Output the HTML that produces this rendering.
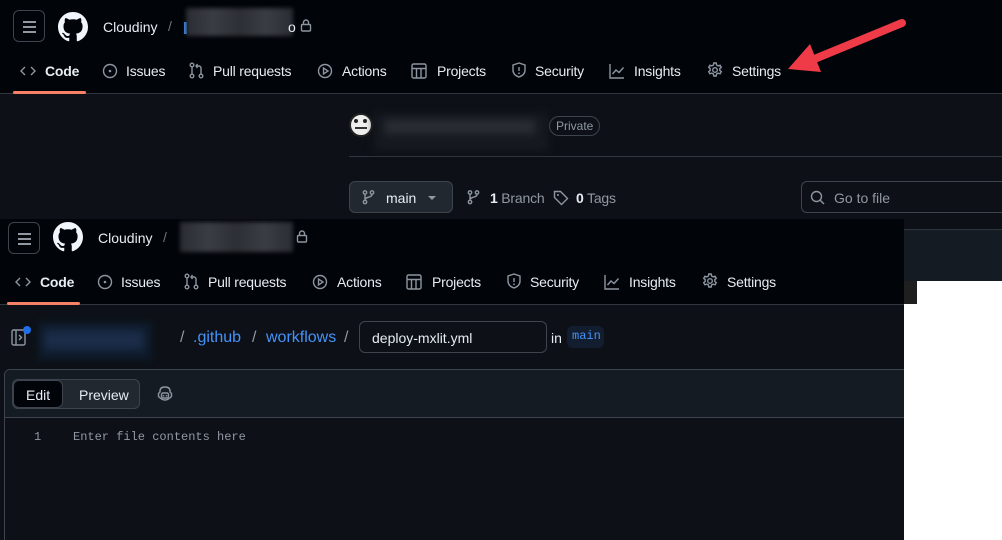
<!DOCTYPE html>
<html><head><meta charset="utf-8"><style>
*{margin:0;padding:0;box-sizing:border-box}
html,body{width:1002px;height:540px;overflow:hidden}
body{background:#0d1117;position:relative;font-family:"Liberation Sans",sans-serif;color:#e6edf3;font-size:14px}
.a{position:absolute}
.t{position:absolute;white-space:nowrap}
svg{position:absolute;overflow:visible}
.ic{fill:none;stroke:#8d96a0;stroke-width:1.4}
.hdr{position:absolute;left:0;width:1002px;height:94px;background:#010409;border-bottom:1px solid #30363d}
.ham{position:absolute;width:32px;height:32px;border:1px solid #3d444d;border-radius:6px}
.ham i{position:absolute;left:9px;width:13px;height:1.6px;background:#9198a1}
.blur{position:absolute;background:linear-gradient(90deg,#2a2d33,#3a3d44,#2c2f35,#3a3d44,#2a2d33);filter:blur(2px)}
.tb .t{letter-spacing:-0.2px}
</style></head><body>

<div class="hdr" style="top:0"></div>
<div class="ham" style="left:13px;top:10px"><i style="top:10px"></i><i style="top:15px"></i><i style="top:20px"></i></div>
<svg style="left:58px;top:12px" width="30" height="30" viewBox="0 0 16 16"><path fill="#f0f6fc" d="M8 0C3.58 0 0 3.58 0 8c0 3.54 2.29 6.53 5.47 7.59.4.07.55-.17.55-.38 0-.19-.01-.82-.01-1.49-2.01.37-2.53-.49-2.69-.94-.09-.23-.48-.94-.82-1.13-.28-.15-.68-.52-.01-.53.63-.01 1.08.58 1.23.82.72 1.21 1.87.87 2.33.66.07-.52.28-.87.51-1.07-1.78-.2-3.64-.89-3.64-3.95 0-.87.31-1.59.82-2.15-.08-.2-.36-1.02.08-2.12 0 0 .67-.21 2.2.82.64-.18 1.32-.27 2-.27.68 0 1.36.09 2 .27 1.53-1.04 2.2-.82 2.2-.82.44 1.1.16 1.92.08 2.12.51.56.82 1.27.82 2.15 0 3.07-1.87 3.75-3.65 3.95.29.25.54.73.54 1.48 0 1.07-.01 1.93-.01 2.2 0 .21.15.46.55.38A8.013 8.013 0 0016 8c0-4.42-3.58-8-8-8z"/></svg>
<div class="t" style="left:103px;top:19px;font-size:14px">Cloudiny</div>
<div class="t" style="left:168px;top:18px;color:#6e7681">/</div>
<div class="a" style="left:184px;top:22px;width:3px;height:12px;background:#4493f8"></div>
<div class="blur" style="left:186px;top:8px;width:107px;height:28px"></div>
<div class="t" style="left:288px;top:19px;color:#e6edf3">o</div>
<svg style="left:300px;top:19px" width="12" height="13"><rect x="1.5" y="5.5" width="9" height="6.5" rx="1" class="ic" stroke="#e6edf3"/><path d="M3.5 5.5V3.5a2.5 2.5 0 015 0v2" class="ic" stroke="#e6edf3"/></svg>

<div class="tb">
<svg style="left:20px;top:64px" width="16" height="14"><path d="M5 3L1 7l4 4M11 3l4 4-4 4" class="ic"/></svg>
<div class="t" style="left:45px;top:63px;font-weight:bold">Code</div>
<div class="a" style="left:13px;top:91px;width:73px;height:3px;background:#f78166;border-radius:2px"></div>
<svg style="left:102px;top:63px" width="16" height="16"><circle cx="8" cy="8" r="6.5" class="ic"/><circle cx="8" cy="8" r="1.3" fill="#8d96a0"/></svg>
<div class="t" style="left:126px;top:63px">Issues</div>
<svg style="left:189px;top:62px" width="16" height="17"><circle cx="3" cy="3" r="1.8" class="ic"/><circle cx="3" cy="14" r="1.8" class="ic"/><circle cx="12" cy="14" r="1.8" class="ic"/><path d="M3 5v7M12 12V6c0-1-1-2-2-2H7M8.5 2L7 4l1.5 2" class="ic"/></svg>
<div class="t" style="left:213px;top:63px">Pull requests</div>
<svg style="left:317px;top:63px" width="16" height="16"><circle cx="8" cy="8" r="6.5" class="ic"/><path d="M6.5 5v6l4.5-3z" class="ic"/></svg>
<div class="t" style="left:342px;top:63px">Actions</div>
<svg style="left:411px;top:63px" width="16" height="16"><rect x="1" y="1" width="14" height="14" rx="1.5" class="ic"/><path d="M1 5.5h14M5.5 5.5V15M10 5.5V15" class="ic"/></svg>
<div class="t" style="left:437px;top:63px">Projects</div>
<svg style="left:511px;top:62px" width="16" height="17"><path d="M8 1L2 3v5c0 4 3 6 6 7 3-1 6-3 6-7V3z" class="ic"/><path d="M8 5v4" class="ic"/><circle cx="8" cy="11.3" r=".9" fill="#8d96a0"/></svg>
<div class="t" style="left:535px;top:63px">Security</div>
<svg style="left:609px;top:63px" width="16" height="16"><path d="M1 1v14h14M3.5 11l3.5-4 3 2.5 4.5-5" class="ic"/></svg>
<div class="t" style="left:634px;top:63px">Insights</div>
<svg style="left:707px;top:62px" width="16" height="16"><circle cx="8" cy="8" r="2.3" class="ic"/><path d="M6.8 1h2.4l.4 2 1.6.9 1.9-.7 1.2 2.1-1.5 1.3v1.8l1.5 1.3-1.2 2.1-1.9-.7-1.6.9-.4 2H6.8l-.4-2-1.6-.9-1.9.7-1.2-2.1 1.5-1.3V6.6L1.7 5.3l1.2-2.1 1.9.7 1.6-.9z" class="ic"/></svg>
<div class="t" style="left:732px;top:63px">Settings</div>
</div>

<div class="a" style="left:349px;top:156px;width:653px;height:1px;background:#30363d"></div>
<div class="a" style="left:349px;top:113px;width:24px;height:24px;border-radius:50%;background:#eee;border:2px solid #222"></div>
<div class="a" style="left:354px;top:119px;width:4px;height:4px;border-radius:50%;background:#222"></div>
<div class="a" style="left:363px;top:119px;width:4px;height:4px;border-radius:50%;background:#222"></div>
<div class="a" style="left:355px;top:127px;width:12px;height:2px;background:#333"></div>
<div class="blur" style="left:374px;top:113px;width:174px;height:38px;background:#161a20;filter:blur(4px)"></div>
<div class="blur" style="left:385px;top:120px;width:150px;height:14px;background:#2a2d33;filter:blur(4px)"></div>
<div class="t" style="left:549px;top:116px;height:20px;padding:2px 6px;border:1px solid #3d444d;border-radius:10px;font-size:12px;color:#9198a1;line-height:14px">Private</div>
<div class="a" style="left:349px;top:181px;width:104px;height:32px;background:#212830;border:1px solid #3d444d;border-radius:6px"></div>
<svg style="left:362px;top:190px" width="12" height="14"><circle cx="3" cy="2.5" r="1.7" class="ic"/><circle cx="3" cy="12" r="1.7" class="ic"/><circle cx="10" cy="2.5" r="1.7" class="ic"/><path d="M3 4.2v6M10 4.2c0 4-7 2-7 6" class="ic"/></svg>
<div class="t" style="left:386px;top:190px">main</div>
<div class="a" style="left:428px;top:196px;border:4px solid transparent;border-top:4px solid #9198a1"></div>
<svg style="left:467px;top:190px" width="12" height="14"><circle cx="3" cy="2.5" r="1.7" class="ic"/><circle cx="3" cy="12" r="1.7" class="ic"/><circle cx="10" cy="2.5" r="1.7" class="ic"/><path d="M3 4.2v6M10 4.2c0 4-7 2-7 6" class="ic"/></svg>
<div class="t" style="left:490px;top:190px;letter-spacing:-0.2px"><b>1</b> <span style="color:#9198a1">Branch</span></div>
<svg style="left:553px;top:190px" width="16" height="16"><path d="M1.5 1.5h6l7 7-6 6-7-7z" class="ic"/><circle cx="5" cy="5" r="1" fill="#8d96a0"/></svg>
<div class="t" style="left:576px;top:190px;letter-spacing:-0.2px"><b>0</b> <span style="color:#9198a1">Tags</span></div>
<div class="a" style="left:801px;top:181px;width:201px;height:32px;border:1px solid #3d444d;border-right:none;border-radius:6px 0 0 6px;background:#0d1117"></div>
<svg style="left:810px;top:190px" width="16" height="16"><circle cx="6.5" cy="6.5" r="5" class="ic"/><path d="M10.2 10.2L14 14" class="ic"/></svg>
<div class="t" style="left:834px;top:190px;color:#9198a1">Go to file</div>
<div class="a" style="left:904px;top:229px;width:98px;height:1px;background:#30363d"></div>
<div class="a" style="left:904px;top:230px;width:98px;height:51px;background:#151b23"></div>
<div class="a" style="left:904px;top:281px;width:13px;height:23px;background:#1f1f1f"></div>
<div class="a" style="left:917px;top:281px;width:85px;height:23px;background:#fff"></div>
<div class="a" style="left:904px;top:304px;width:98px;height:236px;background:#fff"></div>

<svg style="left:0;top:0" width="1002" height="100"><path d="M902 23L812 60" stroke="#ef3b48" stroke-width="8" stroke-linecap="round" fill="none"/><path d="M788 69L810 44L821 72Z" fill="#ef3b48"/></svg>

<div class="a" style="left:0;top:219px;width:904px;height:321px;background:#0d1117;overflow:hidden">
<div class="hdr" style="top:0;width:904px;height:86px"></div>
</div>
<div class="ham" style="left:8px;top:222px"><i style="top:10px"></i><i style="top:15px"></i><i style="top:20px"></i></div>
<svg style="left:53px;top:222px" width="30" height="30" viewBox="0 0 16 16"><path fill="#f0f6fc" d="M8 0C3.58 0 0 3.58 0 8c0 3.54 2.29 6.53 5.47 7.59.4.07.55-.17.55-.38 0-.19-.01-.82-.01-1.49-2.01.37-2.53-.49-2.69-.94-.09-.23-.48-.94-.82-1.13-.28-.15-.68-.52-.01-.53.63-.01 1.08.58 1.23.82.72 1.21 1.87.87 2.33.66.07-.52.28-.87.51-1.07-1.78-.2-3.64-.89-3.64-3.95 0-.87.31-1.59.82-2.15-.08-.2-.36-1.02.08-2.12 0 0 .67-.21 2.2.82.64-.18 1.32-.27 2-.27.68 0 1.36.09 2 .27 1.53-1.04 2.2-.82 2.2-.82.44 1.1.16 1.92.08 2.12.51.56.82 1.27.82 2.15 0 3.07-1.87 3.75-3.65 3.95.29.25.54.73.54 1.48 0 1.07-.01 1.93-.01 2.2 0 .21.15.46.55.38A8.013 8.013 0 0016 8c0-4.42-3.58-8-8-8z"/></svg>
<div class="t" style="left:98px;top:230px">Cloudiny</div>
<div class="t" style="left:163px;top:229px;color:#6e7681">/</div>
<div class="blur" style="left:180px;top:222px;width:113px;height:30px"></div>
<svg style="left:296px;top:230px" width="12" height="13"><rect x="1.5" y="5.5" width="9" height="6.5" rx="1" class="ic" stroke="#e6edf3"/><path d="M3.5 5.5V3.5a2.5 2.5 0 015 0v2" class="ic" stroke="#e6edf3"/></svg>

<div class="tb" style="position:absolute;left:-5px;top:211px;width:900px;height:90px">
<svg style="left:20px;top:64px" width="16" height="14"><path d="M5 3L1 7l4 4M11 3l4 4-4 4" class="ic"/></svg>
<div class="t" style="left:45px;top:63px;font-weight:bold">Code</div>
<div class="a" style="left:12px;top:91px;width:73px;height:3px;background:#f78166;border-radius:2px"></div>
<svg style="left:102px;top:63px" width="16" height="16"><circle cx="8" cy="8" r="6.5" class="ic"/><circle cx="8" cy="8" r="1.3" fill="#8d96a0"/></svg>
<div class="t" style="left:126px;top:63px">Issues</div>
<svg style="left:189px;top:62px" width="16" height="17"><circle cx="3" cy="3" r="1.8" class="ic"/><circle cx="3" cy="14" r="1.8" class="ic"/><circle cx="12" cy="14" r="1.8" class="ic"/><path d="M3 5v7M12 12V6c0-1-1-2-2-2H7M8.5 2L7 4l1.5 2" class="ic"/></svg>
<div class="t" style="left:213px;top:63px">Pull requests</div>
<svg style="left:317px;top:63px" width="16" height="16"><circle cx="8" cy="8" r="6.5" class="ic"/><path d="M6.5 5v6l4.5-3z" class="ic"/></svg>
<div class="t" style="left:342px;top:63px">Actions</div>
<svg style="left:411px;top:63px" width="16" height="16"><rect x="1" y="1" width="14" height="14" rx="1.5" class="ic"/><path d="M1 5.5h14M5.5 5.5V15M10 5.5V15" class="ic"/></svg>
<div class="t" style="left:437px;top:63px">Projects</div>
<svg style="left:511px;top:62px" width="16" height="17"><path d="M8 1L2 3v5c0 4 3 6 6 7 3-1 6-3 6-7V3z" class="ic"/><path d="M8 5v4" class="ic"/><circle cx="8" cy="11.3" r=".9" fill="#8d96a0"/></svg>
<div class="t" style="left:535px;top:63px">Security</div>
<svg style="left:609px;top:63px" width="16" height="16"><path d="M1 1v14h14M3.5 11l3.5-4 3 2.5 4.5-5" class="ic"/></svg>
<div class="t" style="left:634px;top:63px">Insights</div>
<svg style="left:707px;top:62px" width="16" height="16"><circle cx="8" cy="8" r="2.3" class="ic"/><path d="M6.8 1h2.4l.4 2 1.6.9 1.9-.7 1.2 2.1-1.5 1.3v1.8l1.5 1.3-1.2 2.1-1.9-.7-1.6.9-.4 2H6.8l-.4-2-1.6-.9-1.9.7-1.2-2.1 1.5-1.3V6.6L1.7 5.3l1.2-2.1 1.9.7 1.6-.9z" class="ic"/></svg>
<div class="t" style="left:732px;top:63px">Settings</div>
</div>

<svg style="left:11px;top:328px" width="16" height="18"><rect x="1" y="2" width="13" height="15" rx="1.5" class="ic"/><path d="M5 2v15M8 7l2.5 2.5L8 12" class="ic"/></svg>
<div class="a" style="left:23px;top:326px;width:8px;height:8px;border-radius:50%;background:#1f6feb"></div>
<div class="blur" style="left:38px;top:322px;width:114px;height:38px;background:#0f1a2a;filter:blur(3px)"></div>
<div class="blur" style="left:44px;top:330px;width:100px;height:20px;background:#1a2c48;filter:blur(4px)"></div>
<div class="t" style="left:180px;top:329px;font-size:16px;color:#9198a1">/</div>
<div class="t" style="left:193px;top:329px;font-size:16px;color:#4493f8">.github</div>
<div class="t" style="left:252px;top:329px;font-size:16px;color:#9198a1">/</div>
<div class="t" style="left:266px;top:329px;font-size:16px;color:#4493f8">workflows</div>
<div class="t" style="left:344px;top:329px;font-size:16px;color:#9198a1">/</div>
<div class="a" style="left:359px;top:321px;width:188px;height:32px;border:1px solid #3d444d;border-radius:6px;background:#0d1117"></div>
<div class="t" style="left:372px;top:330px">deploy-mxlit.yml</div>
<div class="t" style="left:551px;top:330px">in</div>
<div class="t" style="left:567px;top:326px;height:22px;width:37px;background:#121d2f;border-radius:6px;color:#4493f8;font-family:'Liberation Mono',monospace;font-size:12px;padding:3px 5px">main</div>

<div class="a" style="left:4px;top:369px;width:900px;height:171px;overflow:hidden">
<div class="a" style="left:0;top:0;width:920px;height:200px;border:1px solid #3d444d;border-radius:6px 0 0 0"></div>
<div class="a" style="left:1px;top:1px;width:920px;height:48px;background:#151b23;border-bottom:1px solid #3d444d;border-radius:6px 0 0 0"></div>
</div>
<div class="a" style="left:12px;top:379px;width:128px;height:30px;background:#212830;border:1px solid #3d444d;border-radius:6px"></div>
<div class="a" style="left:13px;top:380px;width:50px;height:28px;background:#010409;border-radius:6px;border:1px solid #3d444d"></div>
<div class="t" style="left:26px;top:387px">Edit</div>
<div class="t" style="left:79px;top:387px">Preview</div>
<svg style="left:157px;top:386px" width="16" height="15"><path d="M3 5c0-3 2-4 5-4s5 1 5 4v1l1.5 1.5v3C12 13 10 14 8 14s-4-1-6.5-3.5v-3L3 6z" class="ic"/><rect x="4.5" y="7" width="7" height="5" rx="1.5" class="ic"/><path d="M6.5 9v1.5M9.5 9v1.5" class="ic"/></svg>
<div class="t" style="left:34px;top:430px;font-family:'Liberation Mono',monospace;font-size:12px;color:#9198a1">1</div>
<div class="t" style="left:73px;top:430px;font-family:'Liberation Mono',monospace;font-size:12px;color:#9198a1">Enter file contents here</div>
</body></html>
